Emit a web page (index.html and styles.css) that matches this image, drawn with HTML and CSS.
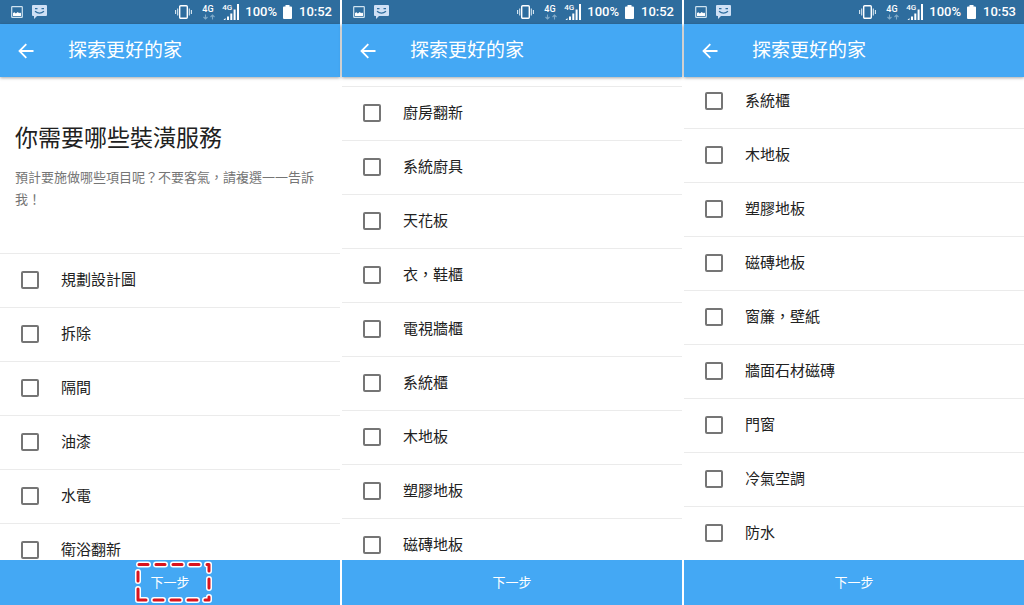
FILE: index.html
```html
<!DOCTYPE html>
<html lang="zh-Hant">
<head>
<meta charset="utf-8">
<meta name="viewport" content="width=device-width, initial-scale=1">
<title>探索更好的家</title>
<link rel="stylesheet" href="styles.css">
</head>
<body>
<svg class="sprite" aria-hidden="true">
  <symbol id="picture" viewBox="0 0 12 12"><rect x=".7" y=".7" width="10.6" height="10.6" rx=".6" fill="none" stroke="#cfe3f0" stroke-width="1.2"/><path d="M2 10V7l1.500-.8 1.300 1.200L6.800 6l1.400 1.200L9 6.500l1 .8V10z" fill="#fff"/></symbol>
  <symbol id="message" viewBox="0 0 15 14"><path d="M1 0h13a1 1 0 0 1 1 1v9a1 1 0 0 1-1 1H5l-3 3v-3H1a1 1 0 0 1-1-1V1a1 1 0 0 1 1-1z" fill="#cfe0f5"/><path d="M3 3.700h2.500M9.500 3.700H12M3 6.200Q7.500 10 12 6.200" fill="none" stroke="#2e6d9e" stroke-width="1.200"/></symbol>
  <symbol id="vibrate" viewBox="0 0 17 14"><rect x="4.700" y=".8" width="7.600" height="12.400" rx="1" fill="none" stroke="#fff" stroke-width="1.400"/><path d="M2.700 3.500v7M.6 5v4M14.300 3.500v7M16.400 5v4" stroke="#d9e8f2" stroke-width="1.100"/></symbol>
  <symbol id="arrows" viewBox="0 0 14 6"><path d="M3.500 .5v4.500M1.500 3l2 2 2-2M10.500 5.500V1M8.500 3l2-2 2 2" fill="none" stroke="#7fa9c8" stroke-width="1.100"/></symbol>
  <symbol id="bars" viewBox="0 0 18 16"><path d="M1.500 16l2-2v2zM5 12.500h2V16H5zM8.300 9.500h2V16h-2zM11.600 5.500h2V16h-2zM15 0h2v16h-2z" fill="#fff"/></symbol>
  <symbol id="battery" viewBox="0 0 9 14"><path d="M2.500 0h4v1.500H8a1 1 0 0 1 1 1V13a1 1 0 0 1-1 1H1a1 1 0 0 1-1-1V2.500a1 1 0 0 1 1-1h1.500z" fill="#fff"/></symbol>
  <symbol id="back" viewBox="0 0 16 16"><path d="M15.500 8H1.800M8.300 1.200L1.500 8l6.800 6.800" fill="none" stroke="#fff" stroke-width="1.800"/></symbol>
</svg>
<main class="screens">
  <section class="phone">
    <div class="status">
      <svg class="i-picture"><use href="#picture"/></svg><svg class="i-message"><use href="#message"/></svg>
      <svg class="i-vibrate"><use href="#vibrate"/></svg>
      <span class="data"><span class="net">4G</span><svg class="i-arrows"><use href="#arrows"/></svg></span>
      <span class="signal"><svg class="i-bars"><use href="#bars"/></svg><span class="net net-small">4G</span></span>
      <span class="percent">100%</span><svg class="i-battery"><use href="#battery"/></svg><time class="clock">10:52</time>
    </div>
    <header class="appbar"><button class="back" aria-label="返回"><svg class="i-back"><use href="#back"/></svg></button><h1 class="title">探索更好的家</h1></header>
    <div class="content">
      <div class="intro"><h2 class="question">你需要哪些裝潢服務</h2><p class="hint">預計要施做哪些項目呢？不要客氣，請複選一一告訴我！</p></div>
      <div class="list">
        <label class="row"><input type="checkbox" class="check"><span>規劃設計圖</span></label>
        <label class="row"><input type="checkbox" class="check"><span>拆除</span></label>
        <label class="row"><input type="checkbox" class="check"><span>隔間</span></label>
        <label class="row"><input type="checkbox" class="check"><span>油漆</span></label>
        <label class="row"><input type="checkbox" class="check"><span>水電</span></label>
        <label class="row"><input type="checkbox" class="check"><span>衛浴翻新</span></label>
      </div>
    </div>
    <footer class="footer">
      <button class="next">下一步</button>
      <svg class="highlight" viewBox="0 0 80 45" aria-hidden="true">
        <path class="halo" d="M5 4.500H14M22 4.500H31M39 4.500H48M56 4.500H65M73 4.500H75V11M75 19V28M75 37V40H71M63 40H54M46 40H37M29 40H20M12 40H4V29M4 21V12"/>
        <path class="dash" d="M5 4.500H14M22 4.500H31M39 4.500H48M56 4.500H65M73 4.500H75V11M75 19V28M75 37V40H71M63 40H54M46 40H37M29 40H20M12 40H4V29M4 21V12"/>
      </svg>
    </footer>
  </section>
  <section class="phone">
    <div class="status">
      <svg class="i-picture"><use href="#picture"/></svg><svg class="i-message"><use href="#message"/></svg>
      <svg class="i-vibrate"><use href="#vibrate"/></svg>
      <span class="data"><span class="net">4G</span><svg class="i-arrows"><use href="#arrows"/></svg></span>
      <span class="signal"><svg class="i-bars"><use href="#bars"/></svg><span class="net net-small">4G</span></span>
      <span class="percent">100%</span><svg class="i-battery"><use href="#battery"/></svg><time class="clock">10:52</time>
    </div>
    <header class="appbar"><button class="back" aria-label="返回"><svg class="i-back"><use href="#back"/></svg></button><h1 class="title">探索更好的家</h1></header>
    <div class="content">
      <div class="list list-middle">
        <label class="row"><input type="checkbox" class="check"><span>廚房翻新</span></label>
        <label class="row"><input type="checkbox" class="check"><span>系統廚具</span></label>
        <label class="row"><input type="checkbox" class="check"><span>天花板</span></label>
        <label class="row"><input type="checkbox" class="check"><span>衣，鞋櫃</span></label>
        <label class="row"><input type="checkbox" class="check"><span>電視牆櫃</span></label>
        <label class="row"><input type="checkbox" class="check"><span>系統櫃</span></label>
        <label class="row"><input type="checkbox" class="check"><span>木地板</span></label>
        <label class="row"><input type="checkbox" class="check"><span>塑膠地板</span></label>
        <label class="row"><input type="checkbox" class="check"><span>磁磚地板</span></label>
      </div>
    </div>
    <footer class="footer"><button class="next">下一步</button></footer>
  </section>
  <section class="phone">
    <div class="status">
      <svg class="i-picture"><use href="#picture"/></svg><svg class="i-message"><use href="#message"/></svg>
      <svg class="i-vibrate"><use href="#vibrate"/></svg>
      <span class="data"><span class="net">4G</span><svg class="i-arrows"><use href="#arrows"/></svg></span>
      <span class="signal"><svg class="i-bars"><use href="#bars"/></svg><span class="net net-small">4G</span></span>
      <span class="percent">100%</span><svg class="i-battery"><use href="#battery"/></svg><time class="clock">10:53</time>
    </div>
    <header class="appbar"><button class="back" aria-label="返回"><svg class="i-back"><use href="#back"/></svg></button><h1 class="title">探索更好的家</h1></header>
    <div class="content">
      <div class="list list-end">
        <label class="row"><input type="checkbox" class="check"><span>系統櫃</span></label>
        <label class="row"><input type="checkbox" class="check"><span>木地板</span></label>
        <label class="row"><input type="checkbox" class="check"><span>塑膠地板</span></label>
        <label class="row"><input type="checkbox" class="check"><span>磁磚地板</span></label>
        <label class="row"><input type="checkbox" class="check"><span>窗簾，壁紙</span></label>
        <label class="row"><input type="checkbox" class="check"><span>牆面石材磁磚</span></label>
        <label class="row"><input type="checkbox" class="check"><span>門窗</span></label>
        <label class="row"><input type="checkbox" class="check"><span>冷氣空調</span></label>
        <label class="row"><input type="checkbox" class="check"><span>防水</span></label>
      </div>
    </div>
    <footer class="footer"><button class="next">下一步</button></footer>
  </section>
</main>
</body>
</html>
```
FILE: styles.css
```css
* { box-sizing: border-box; }
body { margin: 0; background: #fff; color: #212121; font-family: Roboto, "Noto Sans CJK TC", sans-serif; }
svg { display: block; flex: none; }
.sprite { position: absolute; width: 0; height: 0; }
.screens { display: grid; grid-template-columns: repeat(3, 1fr); gap: 2px; height: 100vh; }
.phone { display: flex; flex-direction: column; min-width: 0; min-height: 0; }

.status { display: flex; align-items: center; flex: none; height: 24px; padding: 0 8px 0 11px; background: #2e6d9e; color: #fff; font-size: 13px; font-weight: 500; line-height: 16px; }
.i-picture { width: 12px; height: 12px; }
.i-message { width: 15px; height: 14px; margin-left: 9px; }
.i-vibrate { width: 17px; height: 14px; margin-left: auto; }
.data { display: flex; flex-direction: column; width: 14px; margin-left: 10px; }
.i-arrows { width: 14px; height: 6px; }
.signal { position: relative; margin-left: 6px; }
.i-bars { width: 18px; height: 16px; }
.percent { margin-left: 5px; }
.i-battery { width: 9px; height: 14px; margin-left: 6px; }
.clock { margin-left: 7px; }
.net { font-size: 9px; line-height: 10px; }
.net-small { position: absolute; top: 0; left: 0; font-size: 8px; line-height: 8px; }

.appbar { position: relative; z-index: 1; display: flex; align-items: center; flex: none; height: 53px; padding-left: 18px; background: #44a8f4; box-shadow: 0 1px 3px rgba(0, 0, 0, .35); }
.back { padding: 0; border: 0; background: none; }
.i-back { width: 16px; height: 16px; }
.title { margin: 0 0 0 34px; color: #fff; font-size: 19px; font-weight: 400; line-height: 28px; }

.content { flex: 1; min-height: 0; overflow: hidden; }
.intro { padding: 45px 15px 42px; }
.question { margin: 0; font-size: 23px; font-weight: 400; line-height: 34px; }
.hint { margin: 11px 0 0; color: #757575; font-size: 13px; line-height: 22px; }
.list-middle { margin-top: 9px; }
.list-end { margin-top: -3px; }
.row { display: flex; align-items: center; gap: 22px; min-height: 54px; padding: 0 21px 1px; border-top: 1px solid #ebebeb; font-size: 15px; line-height: 22px; }
.check { appearance: none; flex: none; width: 18px; height: 18px; margin: 0; border: 2px solid #757575; border-radius: 2px; }
.check:checked { border-color: #44a8f4; background: #44a8f4; }

.footer { position: relative; display: flex; flex: none; height: 45px; background: #44a8f4; }
.next { flex: 1; padding: 0; border: 0; background: none; color: #fff; font-family: inherit; font-size: 13px; line-height: 20px; }
.highlight { position: absolute; top: 0; left: calc(50% - 36px); width: 80px; height: 45px; pointer-events: none; }
.halo, .dash { fill: none; stroke-linecap: round; stroke-linejoin: round; }
.halo { stroke: #fff; stroke-width: 6px; }
.dash { stroke: #d9141e; stroke-width: 3px; }
```
